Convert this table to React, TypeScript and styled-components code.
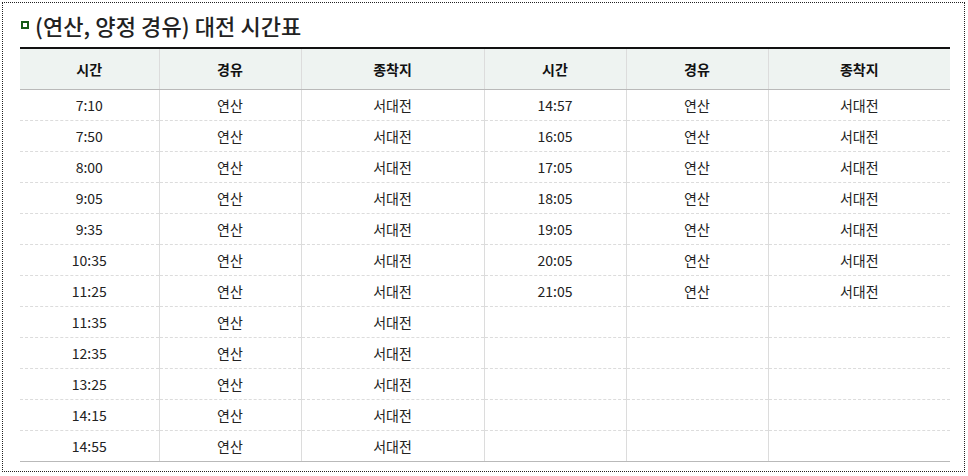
import React from "react";
import styled, { createGlobalStyle } from "styled-components";

const GlobalStyle = createGlobalStyle`
  html, body { margin: 0; padding: 0; background: #fff; }
  body { font-family: "Noto Sans CJK KR", "Noto Sans", sans-serif; color: #222; }
`;

const Frame = styled.div`
  box-sizing: border-box;
  margin: 2px;
  width: 963px;
  height: 470px;
  border: 1px dotted #222;
  padding: 8px 13px 0 17px;
`;

const Title = styled.h3`
  display: flex;
  align-items: center;
  gap: 6px;
  margin: 0 0 9px 0;
  height: 27px;
  font-size: 22px;
  font-weight: 500;
  color: #222;
  letter-spacing: 0.1px;
`;

const Bullet = styled.span`
  display: inline-block;
  box-sizing: border-box;
  width: 8px;
  height: 8px;
  margin-left: 1px;
  border: 2.5px solid #165a16;
  background: #fff;
`;

const Table = styled.table`
  width: 930px;
  table-layout: fixed;
  border-collapse: collapse;
  border-top: 2px solid #111;
  font-size: 14px;
`;

const Th = styled.th`
  height: 40px;
  padding: 0;
  background: #eef3f1;
  font-weight: 700;
  color: #111;
  text-align: center;
  border-bottom: 1px solid #b9b9b9;
  & + & { border-left: 1px solid #dcdcdc; }
`;

const Td = styled.td<{ $last?: boolean }>`
  height: 30px;
  padding: 0;
  text-align: center;
  color: #222;
  border-bottom: ${(p) => (p.$last ? "1px solid #b9b9b9" : "1px dashed #dcdcdc")};
  & + & { border-left: 1px solid #dcdcdc; }
`;

const widths = [139, 142, 183, 142, 142, 182];
const headers = ["시간", "경유", "종착지", "시간", "경유", "종착지"];

const left = ["7:10", "7:50", "8:00", "9:05", "9:35", "10:35", "11:25", "11:35", "12:35", "13:25", "14:15", "14:55"];
const right = ["14:57", "16:05", "17:05", "18:05", "19:05", "20:05", "21:05"];

export default function App() {
  return (
    <>
      <GlobalStyle />
      <Frame>
        <Title>
          <Bullet />
          (연산, 양정 경유) 대전 시간표
        </Title>
        <Table>
          <colgroup>
            {widths.map((w, i) => (
              <col key={i} style={{ width: w }} />
            ))}
          </colgroup>
          <thead>
            <tr>
              {headers.map((h, i) => (
                <Th key={i}>{h}</Th>
              ))}
            </tr>
          </thead>
          <tbody>
            {left.map((t, i) => {
              const last = i === left.length - 1;
              const r = right[i];
              return (
                <tr key={i}>
                  <Td $last={last}>{t}</Td>
                  <Td $last={last}>연산</Td>
                  <Td $last={last}>서대전</Td>
                  <Td $last={last}>{r ?? ""}</Td>
                  <Td $last={last}>{r ? "연산" : ""}</Td>
                  <Td $last={last}>{r ? "서대전" : ""}</Td>
                </tr>
              );
            })}
          </tbody>
        </Table>
      </Frame>
    </>
  );
}
